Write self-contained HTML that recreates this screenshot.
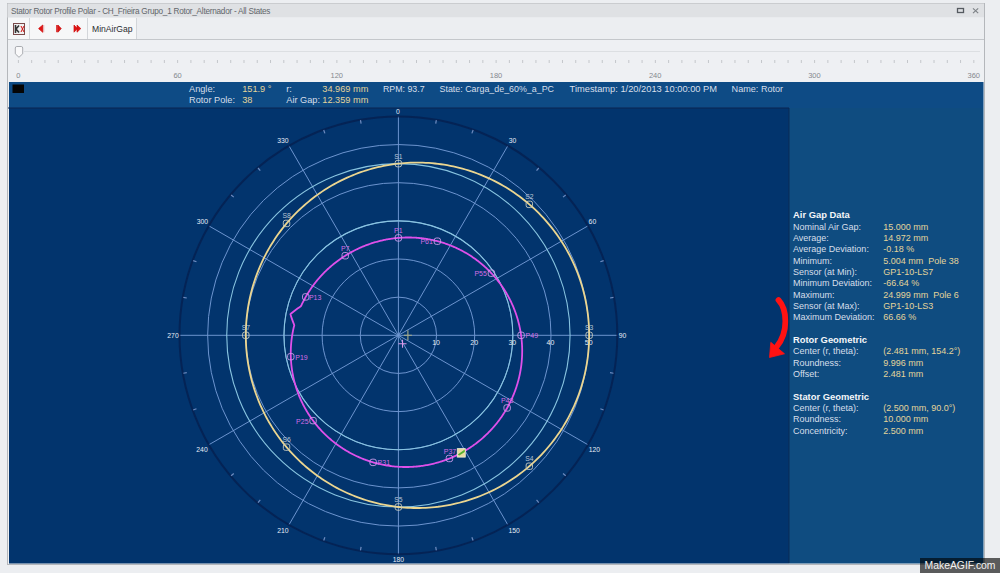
<!DOCTYPE html>
<html><head><meta charset="utf-8">
<style>
*{margin:0;padding:0;box-sizing:border-box}
html,body{width:1000px;height:573px;overflow:hidden;background:#eceef1;font-family:"Liberation Sans",sans-serif}
svg{position:absolute;left:0;top:0}
.al{font-size:6.8px;fill:#e6ecf5;text-anchor:middle}
.gl{font-size:7px;fill:#e6ecf5;text-anchor:middle}
.sl{font-size:6.8px;fill:#b9c4d4;text-anchor:middle}
.pl{font-size:7px;fill:#d46ee6}
.sll{font-size:7.5px;fill:#85898f}
.t{position:absolute;white-space:nowrap;line-height:1}
.lb{color:#d7dfea}
.vl{color:#e3d49a}
</style></head><body>
<svg width="1000" height="573" viewBox="0 0 1000 573">
<!-- window -->
<rect x="7.5" y="3.5" width="977" height="561" fill="#eef0f3" stroke="#b4b7bb" stroke-width="1"/>
<rect x="7.5" y="3.5" width="976.5" height="14" fill="#dfe1e4"/>
<rect x="8" y="17.5" width="976" height="22" fill="#eceef1"/>
<line x1="8" y1="39.5" x2="984" y2="39.5" stroke="#c4c7cb"/>
<rect x="8" y="18" width="21" height="21" fill="#f6f7f8"/>
<rect x="30" y="18" width="57" height="21" fill="#f6f7f8"/>
<rect x="88" y="18" width="48" height="21" fill="#f6f7f8"/>
<line x1="29.5" y1="18" x2="29.5" y2="39" stroke="#d3d6da"/>
<line x1="87.5" y1="18" x2="87.5" y2="39" stroke="#d3d6da"/>
<line x1="136.5" y1="18" x2="136.5" y2="39" stroke="#d3d6da"/>
<!-- slider track -->
<line x1="24" y1="51.5" x2="980" y2="51.5" stroke="#dcdfe2"/>
<line x1="18.40" y1="60" x2="18.40" y2="63" stroke="#c4c7cb" stroke-width="1"/><line x1="31.67" y1="60" x2="31.67" y2="63" stroke="#c4c7cb" stroke-width="1"/><line x1="44.94" y1="60" x2="44.94" y2="63" stroke="#c4c7cb" stroke-width="1"/><line x1="58.21" y1="60" x2="58.21" y2="63" stroke="#c4c7cb" stroke-width="1"/><line x1="71.48" y1="60" x2="71.48" y2="63" stroke="#c4c7cb" stroke-width="1"/><line x1="84.75" y1="60" x2="84.75" y2="63" stroke="#c4c7cb" stroke-width="1"/><line x1="98.02" y1="60" x2="98.02" y2="63" stroke="#c4c7cb" stroke-width="1"/><line x1="111.29" y1="60" x2="111.29" y2="63" stroke="#c4c7cb" stroke-width="1"/><line x1="124.56" y1="60" x2="124.56" y2="63" stroke="#c4c7cb" stroke-width="1"/><line x1="137.83" y1="60" x2="137.83" y2="63" stroke="#c4c7cb" stroke-width="1"/><line x1="151.10" y1="60" x2="151.10" y2="63" stroke="#c4c7cb" stroke-width="1"/><line x1="164.37" y1="60" x2="164.37" y2="63" stroke="#c4c7cb" stroke-width="1"/><line x1="177.64" y1="60" x2="177.64" y2="63" stroke="#c4c7cb" stroke-width="1"/><line x1="190.91" y1="60" x2="190.91" y2="63" stroke="#c4c7cb" stroke-width="1"/><line x1="204.18" y1="60" x2="204.18" y2="63" stroke="#c4c7cb" stroke-width="1"/><line x1="217.45" y1="60" x2="217.45" y2="63" stroke="#c4c7cb" stroke-width="1"/><line x1="230.72" y1="60" x2="230.72" y2="63" stroke="#c4c7cb" stroke-width="1"/><line x1="243.99" y1="60" x2="243.99" y2="63" stroke="#c4c7cb" stroke-width="1"/><line x1="257.26" y1="60" x2="257.26" y2="63" stroke="#c4c7cb" stroke-width="1"/><line x1="270.53" y1="60" x2="270.53" y2="63" stroke="#c4c7cb" stroke-width="1"/><line x1="283.80" y1="60" x2="283.80" y2="63" stroke="#c4c7cb" stroke-width="1"/><line x1="297.07" y1="60" x2="297.07" y2="63" stroke="#c4c7cb" stroke-width="1"/><line x1="310.34" y1="60" x2="310.34" y2="63" stroke="#c4c7cb" stroke-width="1"/><line x1="323.61" y1="60" x2="323.61" y2="63" stroke="#c4c7cb" stroke-width="1"/><line x1="336.88" y1="60" x2="336.88" y2="63" stroke="#c4c7cb" stroke-width="1"/><line x1="350.15" y1="60" x2="350.15" y2="63" stroke="#c4c7cb" stroke-width="1"/><line x1="363.42" y1="60" x2="363.42" y2="63" stroke="#c4c7cb" stroke-width="1"/><line x1="376.69" y1="60" x2="376.69" y2="63" stroke="#c4c7cb" stroke-width="1"/><line x1="389.96" y1="60" x2="389.96" y2="63" stroke="#c4c7cb" stroke-width="1"/><line x1="403.23" y1="60" x2="403.23" y2="63" stroke="#c4c7cb" stroke-width="1"/><line x1="416.50" y1="60" x2="416.50" y2="63" stroke="#c4c7cb" stroke-width="1"/><line x1="429.77" y1="60" x2="429.77" y2="63" stroke="#c4c7cb" stroke-width="1"/><line x1="443.04" y1="60" x2="443.04" y2="63" stroke="#c4c7cb" stroke-width="1"/><line x1="456.31" y1="60" x2="456.31" y2="63" stroke="#c4c7cb" stroke-width="1"/><line x1="469.58" y1="60" x2="469.58" y2="63" stroke="#c4c7cb" stroke-width="1"/><line x1="482.85" y1="60" x2="482.85" y2="63" stroke="#c4c7cb" stroke-width="1"/><line x1="496.12" y1="60" x2="496.12" y2="63" stroke="#c4c7cb" stroke-width="1"/><line x1="509.39" y1="60" x2="509.39" y2="63" stroke="#c4c7cb" stroke-width="1"/><line x1="522.66" y1="60" x2="522.66" y2="63" stroke="#c4c7cb" stroke-width="1"/><line x1="535.93" y1="60" x2="535.93" y2="63" stroke="#c4c7cb" stroke-width="1"/><line x1="549.20" y1="60" x2="549.20" y2="63" stroke="#c4c7cb" stroke-width="1"/><line x1="562.47" y1="60" x2="562.47" y2="63" stroke="#c4c7cb" stroke-width="1"/><line x1="575.74" y1="60" x2="575.74" y2="63" stroke="#c4c7cb" stroke-width="1"/><line x1="589.01" y1="60" x2="589.01" y2="63" stroke="#c4c7cb" stroke-width="1"/><line x1="602.28" y1="60" x2="602.28" y2="63" stroke="#c4c7cb" stroke-width="1"/><line x1="615.55" y1="60" x2="615.55" y2="63" stroke="#c4c7cb" stroke-width="1"/><line x1="628.82" y1="60" x2="628.82" y2="63" stroke="#c4c7cb" stroke-width="1"/><line x1="642.09" y1="60" x2="642.09" y2="63" stroke="#c4c7cb" stroke-width="1"/><line x1="655.36" y1="60" x2="655.36" y2="63" stroke="#c4c7cb" stroke-width="1"/><line x1="668.63" y1="60" x2="668.63" y2="63" stroke="#c4c7cb" stroke-width="1"/><line x1="681.90" y1="60" x2="681.90" y2="63" stroke="#c4c7cb" stroke-width="1"/><line x1="695.17" y1="60" x2="695.17" y2="63" stroke="#c4c7cb" stroke-width="1"/><line x1="708.44" y1="60" x2="708.44" y2="63" stroke="#c4c7cb" stroke-width="1"/><line x1="721.71" y1="60" x2="721.71" y2="63" stroke="#c4c7cb" stroke-width="1"/><line x1="734.98" y1="60" x2="734.98" y2="63" stroke="#c4c7cb" stroke-width="1"/><line x1="748.25" y1="60" x2="748.25" y2="63" stroke="#c4c7cb" stroke-width="1"/><line x1="761.52" y1="60" x2="761.52" y2="63" stroke="#c4c7cb" stroke-width="1"/><line x1="774.79" y1="60" x2="774.79" y2="63" stroke="#c4c7cb" stroke-width="1"/><line x1="788.06" y1="60" x2="788.06" y2="63" stroke="#c4c7cb" stroke-width="1"/><line x1="801.33" y1="60" x2="801.33" y2="63" stroke="#c4c7cb" stroke-width="1"/><line x1="814.60" y1="60" x2="814.60" y2="63" stroke="#c4c7cb" stroke-width="1"/><line x1="827.87" y1="60" x2="827.87" y2="63" stroke="#c4c7cb" stroke-width="1"/><line x1="841.14" y1="60" x2="841.14" y2="63" stroke="#c4c7cb" stroke-width="1"/><line x1="854.41" y1="60" x2="854.41" y2="63" stroke="#c4c7cb" stroke-width="1"/><line x1="867.68" y1="60" x2="867.68" y2="63" stroke="#c4c7cb" stroke-width="1"/><line x1="880.95" y1="60" x2="880.95" y2="63" stroke="#c4c7cb" stroke-width="1"/><line x1="894.22" y1="60" x2="894.22" y2="63" stroke="#c4c7cb" stroke-width="1"/><line x1="907.49" y1="60" x2="907.49" y2="63" stroke="#c4c7cb" stroke-width="1"/><line x1="920.76" y1="60" x2="920.76" y2="63" stroke="#c4c7cb" stroke-width="1"/><line x1="934.03" y1="60" x2="934.03" y2="63" stroke="#c4c7cb" stroke-width="1"/><line x1="947.30" y1="60" x2="947.30" y2="63" stroke="#c4c7cb" stroke-width="1"/><line x1="960.57" y1="60" x2="960.57" y2="63" stroke="#c4c7cb" stroke-width="1"/><line x1="973.84" y1="60" x2="973.84" y2="63" stroke="#c4c7cb" stroke-width="1"/>
<text x="18.40" y="77.6" text-anchor="middle" class="sll">0</text><text x="177.60" y="77.6" text-anchor="middle" class="sll">60</text><text x="336.80" y="77.6" text-anchor="middle" class="sll">120</text><text x="495.99" y="77.6" text-anchor="middle" class="sll">180</text><text x="655.19" y="77.6" text-anchor="middle" class="sll">240</text><text x="814.39" y="77.6" text-anchor="middle" class="sll">300</text><text x="980" y="77.6" text-anchor="end" class="sll">360</text>
<path d="M15.3,48 q0,-1.5 1.5,-1.5 h4.4 q1.5,0 1.5,1.5 v5.8 l-3.7,3.5 l-3.7,-3.5 Z" fill="#f9f9fa" stroke="#a0a4a9" stroke-width="0.9"/>
<!-- icons -->
<rect x="13.5" y="23.5" width="11" height="11" fill="#f0f0f0" stroke="#7a4a4a" stroke-width="1"/>
<path d="M15.5,25 v8 M16,29 l3,-3.5 M16,29 l3,3.5" stroke="#333" stroke-width="1.6"/>
<path d="M21,26 l3,6 M24,26 l-3,6" stroke="#d01010" stroke-width="1"/>
<path d="M38.6,28.6 L42.8,25 V32.3 Z" fill="#e01515" stroke="#d01010" stroke-width="0.8" stroke-linejoin="round"/>
<line x1="43.8" y1="25" x2="43.8" y2="32.2" stroke="#e8b0b0" stroke-width="0.9"/>
<rect x="56.2" y="25" width="1.6" height="7.2" fill="#d81515"/>
<path d="M58,25 L61.3,28.6 L58,32.2 Z" fill="#e01515" stroke="#c01010" stroke-width="0.6" stroke-linejoin="round"/>
<path d="M74,25 L77.5,28.6 L74,32.2 Z M77,25 L80.8,28.6 L77,32.2 Z" fill="#e01515" stroke="#d01010" stroke-width="0.7" stroke-linejoin="round"/>
<!-- title buttons -->
<rect x="957.5" y="8.5" width="6" height="4" fill="none" stroke="#555a60" stroke-width="1.3"/>
<path d="M973,8.3 l5.2,4.8 M978.2,8.3 l-5.2,4.8" stroke="#7c8085" stroke-width="1.1"/>
<!-- info bar + right panel -->
<rect x="9" y="82" width="974.5" height="26" fill="#0e4b85"/>
<rect x="789" y="108" width="194.5" height="455.5" fill="#0f4c80"/>
<rect x="12.5" y="84.5" width="11.5" height="8.5" fill="#050505"/>
<rect x="9" y="108" width="780" height="455.5" fill="#02346d"/>
<circle cx="398.4" cy="335.3" r="38.15" fill="none" stroke="#7299d4" stroke-width="0.95"/>
<circle cx="398.4" cy="335.3" r="76.30" fill="none" stroke="#7299d4" stroke-width="0.95"/>
<circle cx="398.4" cy="335.3" r="114.45" fill="none" stroke="#7299d4" stroke-width="0.95"/>
<circle cx="398.4" cy="335.3" r="152.60" fill="none" stroke="#7299d4" stroke-width="0.95"/>
<circle cx="398.4" cy="335.3" r="190.75" fill="none" stroke="#7299d4" stroke-width="0.95"/>
<line x1="398.4" y1="335.3" x2="398.40" y2="116.40" stroke="#7299d4" stroke-width="0.95"/>
<line x1="398.4" y1="335.3" x2="507.85" y2="145.73" stroke="#7299d4" stroke-width="0.95"/>
<line x1="398.4" y1="335.3" x2="587.97" y2="225.85" stroke="#7299d4" stroke-width="0.95"/>
<line x1="398.4" y1="335.3" x2="617.30" y2="335.30" stroke="#7299d4" stroke-width="0.95"/>
<line x1="398.4" y1="335.3" x2="587.97" y2="444.75" stroke="#7299d4" stroke-width="0.95"/>
<line x1="398.4" y1="335.3" x2="507.85" y2="524.87" stroke="#7299d4" stroke-width="0.95"/>
<line x1="398.4" y1="335.3" x2="398.40" y2="554.20" stroke="#7299d4" stroke-width="0.95"/>
<line x1="398.4" y1="335.3" x2="288.95" y2="524.87" stroke="#7299d4" stroke-width="0.95"/>
<line x1="398.4" y1="335.3" x2="208.83" y2="444.75" stroke="#7299d4" stroke-width="0.95"/>
<line x1="398.4" y1="335.3" x2="179.50" y2="335.30" stroke="#7299d4" stroke-width="0.95"/>
<line x1="398.4" y1="335.3" x2="208.83" y2="225.85" stroke="#7299d4" stroke-width="0.95"/>
<line x1="398.4" y1="335.3" x2="288.95" y2="145.73" stroke="#7299d4" stroke-width="0.95"/>
<circle cx="398.4" cy="335.3" r="218.9" fill="none" stroke="#061a48" stroke-width="2" opacity="0.65"/>
<line x1="436.32" y1="120.22" x2="435.72" y2="123.66" stroke="#6f8cc0" stroke-width="1.2"/>
<line x1="473.10" y1="130.07" x2="471.90" y2="133.36" stroke="#6f8cc0" stroke-width="1.2"/>
<line x1="538.78" y1="168.00" x2="536.54" y2="170.68" stroke="#6f8cc0" stroke-width="1.2"/>
<line x1="565.70" y1="194.92" x2="563.02" y2="197.16" stroke="#6f8cc0" stroke-width="1.2"/>
<line x1="603.63" y1="260.60" x2="600.34" y2="261.80" stroke="#6f8cc0" stroke-width="1.2"/>
<line x1="613.48" y1="297.38" x2="610.04" y2="297.98" stroke="#6f8cc0" stroke-width="1.2"/>
<line x1="613.48" y1="373.22" x2="610.04" y2="372.62" stroke="#6f8cc0" stroke-width="1.2"/>
<line x1="603.63" y1="410.00" x2="600.34" y2="408.80" stroke="#6f8cc0" stroke-width="1.2"/>
<line x1="565.70" y1="475.68" x2="563.02" y2="473.44" stroke="#6f8cc0" stroke-width="1.2"/>
<line x1="538.78" y1="502.60" x2="536.54" y2="499.92" stroke="#6f8cc0" stroke-width="1.2"/>
<line x1="473.10" y1="540.53" x2="471.90" y2="537.24" stroke="#6f8cc0" stroke-width="1.2"/>
<line x1="436.32" y1="550.38" x2="435.72" y2="546.94" stroke="#6f8cc0" stroke-width="1.2"/>
<line x1="360.48" y1="550.38" x2="361.08" y2="546.94" stroke="#6f8cc0" stroke-width="1.2"/>
<line x1="323.70" y1="540.53" x2="324.90" y2="537.24" stroke="#6f8cc0" stroke-width="1.2"/>
<line x1="258.02" y1="502.60" x2="260.26" y2="499.92" stroke="#6f8cc0" stroke-width="1.2"/>
<line x1="231.10" y1="475.68" x2="233.78" y2="473.44" stroke="#6f8cc0" stroke-width="1.2"/>
<line x1="193.17" y1="410.00" x2="196.46" y2="408.80" stroke="#6f8cc0" stroke-width="1.2"/>
<line x1="183.32" y1="373.22" x2="186.76" y2="372.62" stroke="#6f8cc0" stroke-width="1.2"/>
<line x1="183.32" y1="297.38" x2="186.76" y2="297.98" stroke="#6f8cc0" stroke-width="1.2"/>
<line x1="193.17" y1="260.60" x2="196.46" y2="261.80" stroke="#6f8cc0" stroke-width="1.2"/>
<line x1="231.10" y1="194.92" x2="233.78" y2="197.16" stroke="#6f8cc0" stroke-width="1.2"/>
<line x1="258.02" y1="168.00" x2="260.26" y2="170.68" stroke="#6f8cc0" stroke-width="1.2"/>
<line x1="323.70" y1="130.07" x2="324.90" y2="133.36" stroke="#6f8cc0" stroke-width="1.2"/>
<line x1="360.48" y1="120.22" x2="361.08" y2="123.66" stroke="#6f8cc0" stroke-width="1.2"/>
<text x="397.90" y="114.30" class="al">0</text>
<text x="512.50" y="143.20" class="al">30</text>
<text x="592.40" y="224.10" class="al">60</text>
<text x="622.50" y="338.20" class="al">90</text>
<text x="594.30" y="451.60" class="al">120</text>
<text x="514.10" y="532.70" class="al">150</text>
<text x="398.30" y="561.50" class="al">180</text>
<text x="282.80" y="532.70" class="al">210</text>
<text x="202.00" y="451.90" class="al">240</text>
<text x="173.00" y="338.20" class="al">270</text>
<text x="202.30" y="224.00" class="al">300</text>
<text x="282.80" y="142.90" class="al">330</text>
<circle cx="398.4" cy="335.3" r="114.45" fill="none" stroke="#88c4e0" stroke-width="1.1"/>
<circle cx="398.4" cy="335.3" r="171.68" fill="none" stroke="#88c4e0" stroke-width="1.1"/>
<text x="436.05" y="344.50" class="gl">10</text>
<text x="474.20" y="344.50" class="gl">20</text>
<text x="512.35" y="344.50" class="gl">30</text>
<text x="550.50" y="344.50" class="gl">40</text>
<text x="588.65" y="344.50" class="gl">50</text>
<path d="M398.40,163.62 L401.40,163.32 L404.41,163.06 L407.44,162.86 L410.47,162.72 L413.51,162.62 L416.55,162.58 L419.61,162.60 L422.66,162.67 L425.72,162.79 L428.79,162.97 L431.85,163.21 L434.92,163.50 L437.98,163.84 L441.05,164.25 L444.11,164.71 L447.17,165.22 L450.22,165.79 L453.27,166.42 L456.31,167.11 L459.35,167.85 L462.37,168.65 L465.39,169.50 L468.39,170.41 L471.38,171.38 L474.36,172.40 L477.32,173.48 L480.27,174.62 L483.20,175.81 L486.11,177.06 L489.01,178.37 L491.88,179.72 L494.73,181.14 L497.56,182.61 L500.36,184.13 L503.14,185.71 L505.90,187.34 L508.63,189.03 L511.32,190.76 L513.99,192.55 L516.63,194.40 L519.24,196.29 L521.81,198.24 L524.35,200.23 L526.86,202.28 L529.33,204.37 L531.76,206.51 L534.16,208.70 L536.51,210.94 L538.83,213.23 L541.10,215.56 L543.34,217.93 L545.53,220.35 L547.67,222.82 L549.77,225.32 L551.83,227.87 L553.84,230.46 L555.80,233.09 L557.71,235.75 L559.57,238.46 L561.38,241.20 L563.14,243.98 L564.85,246.80 L566.51,249.65 L568.11,252.53 L569.66,255.44 L571.15,258.39 L572.59,261.36 L573.97,264.36 L575.30,267.40 L576.57,270.45 L577.78,273.54 L578.93,276.64 L580.02,279.77 L581.05,282.93 L582.02,286.10 L582.93,289.29 L583.78,292.50 L584.57,295.73 L585.30,298.97 L585.97,302.23 L586.57,305.50 L587.11,308.78 L587.59,312.07 L588.00,315.37 L588.35,318.68 L588.64,322.00 L588.86,325.32 L589.02,328.64 L589.12,331.97 L589.15,335.30 L589.12,338.63 L589.02,341.96 L588.86,345.28 L588.64,348.60 L588.35,351.92 L588.00,355.23 L587.59,358.53 L587.11,361.82 L586.57,365.10 L585.97,368.37 L585.30,371.63 L584.57,374.87 L583.78,378.10 L582.93,381.31 L582.02,384.50 L581.05,387.67 L580.02,390.83 L578.93,393.96 L577.78,397.06 L576.57,400.15 L575.30,403.20 L573.97,406.24 L572.59,409.24 L571.15,412.21 L569.66,415.16 L568.11,418.07 L566.51,420.95 L564.85,423.80 L563.14,426.62 L561.38,429.40 L559.57,432.14 L557.71,434.85 L555.80,437.51 L553.84,440.14 L551.83,442.73 L549.77,445.28 L547.67,447.78 L545.53,450.25 L543.34,452.67 L541.10,455.04 L538.83,457.37 L536.51,459.66 L534.16,461.90 L531.76,464.09 L529.33,466.23 L526.86,468.32 L524.35,470.37 L521.81,472.36 L519.24,474.31 L516.63,476.20 L513.99,478.05 L511.32,479.84 L508.63,481.57 L505.90,483.26 L503.14,484.89 L500.36,486.47 L497.56,487.99 L494.73,489.46 L491.88,490.88 L489.01,492.23 L486.11,493.54 L483.20,494.79 L480.27,495.98 L477.32,497.12 L474.36,498.20 L471.38,499.22 L468.39,500.19 L465.39,501.10 L462.37,501.95 L459.35,502.75 L456.31,503.49 L453.27,504.18 L450.22,504.81 L447.17,505.38 L444.11,505.89 L441.05,506.35 L437.98,506.76 L434.92,507.10 L431.85,507.39 L428.79,507.63 L425.72,507.81 L422.66,507.93 L419.61,508.00 L416.55,508.02 L413.51,507.98 L410.47,507.88 L407.44,507.74 L404.41,507.54 L401.40,507.28 L398.40,506.98 L395.41,506.62 L392.43,506.21 L389.47,505.74 L386.52,505.23 L383.58,504.67 L380.66,504.05 L377.76,503.39 L374.88,502.68 L372.01,501.91 L369.16,501.10 L366.34,500.25 L363.53,499.34 L360.75,498.39 L357.98,497.40 L355.25,496.36 L352.53,495.27 L349.84,494.14 L347.17,492.97 L344.53,491.75 L341.92,490.49 L339.33,489.19 L336.77,487.85 L334.23,486.47 L331.73,485.05 L329.25,483.58 L326.81,482.08 L324.39,480.55 L322.01,478.97 L319.65,477.36 L317.33,475.72 L315.04,474.03 L312.78,472.32 L310.56,470.57 L308.37,468.78 L306.21,466.97 L304.08,465.12 L301.99,463.24 L299.94,461.33 L297.92,459.39 L295.93,457.42 L293.98,455.42 L292.07,453.39 L290.19,451.34 L288.35,449.26 L286.54,447.16 L284.78,445.02 L283.05,442.87 L281.36,440.69 L279.70,438.48 L278.08,436.26 L276.50,434.01 L274.96,431.74 L273.46,429.45 L272.00,427.14 L270.57,424.81 L269.19,422.46 L267.84,420.09 L266.53,417.70 L265.26,415.30 L264.03,412.88 L262.84,410.44 L261.69,407.99 L260.58,405.52 L259.51,403.04 L258.48,400.55 L257.49,398.04 L256.54,395.52 L255.62,392.99 L254.75,390.44 L253.92,387.89 L253.13,385.32 L252.38,382.74 L251.67,380.16 L251.00,377.57 L250.37,374.96 L249.78,372.35 L249.23,369.74 L248.73,367.11 L248.26,364.48 L247.83,361.85 L247.45,359.21 L247.10,356.56 L246.80,353.91 L246.53,351.26 L246.31,348.61 L246.13,345.95 L245.98,343.29 L245.88,340.63 L245.82,337.96 L245.80,335.30 L245.82,332.64 L245.88,329.97 L245.98,327.31 L246.13,324.65 L246.31,321.99 L246.53,319.34 L246.80,316.69 L247.10,314.04 L247.45,311.39 L247.83,308.75 L248.26,306.12 L248.73,303.49 L249.23,300.86 L249.78,298.25 L250.37,295.64 L251.00,293.03 L251.67,290.44 L252.38,287.86 L253.13,285.28 L253.92,282.71 L254.75,280.16 L255.62,277.61 L256.54,275.08 L257.49,272.56 L258.48,270.05 L259.51,267.56 L260.58,265.08 L261.69,262.61 L262.84,260.16 L264.03,257.72 L265.26,255.30 L266.53,252.90 L267.84,250.51 L269.19,248.14 L270.57,245.79 L272.00,243.46 L273.46,241.15 L274.96,238.86 L276.50,236.59 L278.08,234.34 L279.70,232.12 L281.36,229.91 L283.05,227.73 L284.78,225.58 L286.54,223.44 L288.35,221.34 L290.19,219.26 L292.07,217.21 L293.98,215.18 L295.93,213.18 L297.92,211.21 L299.94,209.27 L301.99,207.36 L304.08,205.48 L306.21,203.63 L308.37,201.82 L310.56,200.03 L312.78,198.28 L315.04,196.57 L317.33,194.88 L319.65,193.24 L322.01,191.63 L324.39,190.05 L326.81,188.52 L329.25,187.02 L331.73,185.55 L334.23,184.13 L336.77,182.75 L339.33,181.41 L341.92,180.11 L344.53,178.85 L347.17,177.63 L349.84,176.46 L352.53,175.33 L355.25,174.24 L357.98,173.20 L360.75,172.21 L363.53,171.26 L366.34,170.35 L369.16,169.50 L372.01,168.69 L374.88,167.92 L377.76,167.21 L380.66,166.55 L383.58,165.93 L386.52,165.37 L389.47,164.86 L392.43,164.39 L395.41,163.98 Z" fill="none" stroke="#ecd690" stroke-width="1.8"/>
<path d="M398.40,237.89 L399.25,237.82 L400.10,237.76 L400.96,237.71 L401.81,237.65 L402.67,237.61 L403.52,237.57 L404.38,237.54 L405.24,237.52 L406.10,237.50 L406.96,237.48 L407.82,237.48 L408.68,237.48 L409.54,237.48 L410.41,237.50 L411.27,237.52 L412.14,237.54 L413.01,237.57 L413.87,237.61 L414.74,237.66 L415.61,237.71 L416.48,237.77 L417.35,237.83 L418.22,237.90 L419.09,237.98 L419.96,238.07 L420.83,238.16 L421.70,238.26 L422.57,238.36 L423.44,238.47 L424.31,238.59 L425.18,238.72 L426.06,238.85 L426.93,238.99 L427.80,239.13 L428.67,239.29 L429.54,239.45 L430.42,239.61 L431.29,239.79 L432.16,239.97 L433.03,240.15 L433.90,240.35 L434.77,240.55 L435.64,240.76 L436.51,240.97 L437.38,241.20 L438.25,241.43 L439.11,241.66 L439.98,241.91 L440.85,242.16 L441.71,242.42 L442.58,242.68 L443.44,242.95 L444.30,243.23 L445.16,243.52 L446.02,243.82 L446.88,244.12 L447.74,244.43 L448.60,244.74 L449.45,245.07 L450.30,245.40 L451.16,245.74 L452.01,246.08 L452.86,246.44 L453.70,246.80 L454.55,247.16 L455.39,247.54 L456.23,247.92 L457.07,248.31 L457.91,248.71 L458.75,249.11 L459.58,249.53 L460.41,249.94 L461.24,250.37 L462.07,250.81 L462.89,251.25 L463.72,251.70 L464.54,252.16 L465.35,252.62 L466.17,253.09 L466.98,253.57 L467.79,254.06 L468.59,254.55 L469.40,255.05 L470.20,255.56 L470.99,256.08 L471.79,256.60 L472.58,257.13 L473.36,257.67 L474.15,258.22 L474.93,258.77 L475.70,259.33 L476.48,259.90 L477.24,260.48 L478.01,261.06 L478.77,261.65 L479.53,262.25 L480.28,262.86 L481.03,263.47 L481.78,264.09 L482.52,264.72 L483.25,265.35 L483.98,265.99 L484.71,266.64 L485.44,267.30 L486.15,267.96 L486.87,268.64 L487.58,269.31 L488.28,270.00 L488.98,270.69 L489.67,271.39 L490.36,272.10 L491.04,272.81 L491.72,273.53 L492.40,274.26 L493.06,274.99 L493.73,275.73 L494.38,276.48 L495.03,277.24 L495.68,278.00 L496.32,278.77 L496.95,279.54 L497.58,280.33 L498.20,281.11 L498.81,281.91 L499.42,282.71 L500.02,283.52 L500.62,284.34 L501.21,285.16 L501.79,285.99 L502.37,286.82 L502.94,287.66 L503.50,288.51 L504.05,289.36 L504.60,290.22 L505.14,291.08 L505.68,291.96 L506.21,292.83 L506.73,293.72 L507.24,294.61 L507.75,295.50 L508.24,296.40 L508.73,297.31 L509.22,298.22 L509.69,299.14 L510.16,300.06 L510.62,300.99 L511.07,301.93 L511.51,302.87 L511.95,303.81 L512.38,304.76 L512.80,305.72 L513.21,306.68 L513.61,307.64 L514.00,308.61 L514.39,309.59 L514.77,310.57 L515.13,311.55 L515.49,312.54 L515.85,313.53 L516.19,314.53 L516.52,315.53 L516.84,316.54 L517.16,317.55 L517.47,318.57 L517.76,319.59 L518.05,320.61 L518.33,321.64 L518.60,322.67 L518.86,323.70 L519.11,324.74 L519.35,325.78 L519.58,326.83 L519.81,327.87 L520.02,328.93 L520.22,329.98 L520.41,331.04 L520.60,332.10 L520.77,333.16 L520.94,334.23 L521.09,335.30 L521.23,336.37 L521.37,337.45 L521.49,338.52 L521.60,339.60 L521.71,340.68 L521.80,341.77 L521.88,342.85 L521.96,343.94 L522.02,345.03 L522.07,346.12 L522.11,347.21 L522.14,348.31 L522.16,349.40 L522.18,350.50 L522.17,351.60 L522.16,352.69 L522.14,353.79 L522.11,354.89 L522.07,356.00 L522.02,357.10 L521.95,358.20 L521.88,359.30 L521.79,360.40 L521.70,361.51 L521.59,362.61 L521.47,363.71 L521.35,364.82 L521.21,365.92 L521.06,367.02 L520.90,368.12 L520.73,369.22 L520.55,370.32 L520.35,371.42 L520.15,372.52 L519.93,373.62 L519.71,374.72 L519.47,375.81 L519.23,376.90 L518.97,378.00 L518.70,379.09 L518.42,380.17 L518.13,381.26 L517.83,382.34 L517.52,383.43 L517.20,384.51 L516.86,385.58 L516.52,386.66 L516.16,387.73 L515.80,388.80 L515.42,389.87 L515.04,390.93 L514.64,391.99 L514.23,393.05 L513.81,394.10 L513.38,395.16 L512.94,396.20 L512.49,397.25 L512.03,398.29 L511.56,399.32 L511.08,400.35 L510.58,401.38 L510.08,402.40 L509.57,403.42 L509.04,404.44 L508.51,405.45 L507.97,406.45 L507.41,407.45 L506.85,408.45 L506.27,409.44 L505.69,410.42 L505.09,411.40 L504.49,412.38 L503.87,413.35 L503.25,414.31 L502.62,415.27 L501.97,416.22 L501.32,417.17 L500.66,418.10 L499.98,419.04 L499.30,419.97 L498.61,420.89 L497.91,421.80 L497.20,422.71 L496.48,423.61 L495.75,424.50 L495.01,425.39 L494.26,426.27 L493.51,427.14 L492.74,428.01 L491.97,428.87 L491.19,429.72 L490.40,430.56 L489.60,431.40 L488.79,432.23 L487.97,433.05 L487.15,433.86 L486.31,434.67 L485.47,435.46 L484.62,436.25 L483.76,437.03 L482.90,437.80 L482.02,438.57 L481.14,439.32 L480.25,440.07 L479.36,440.81 L478.45,441.53 L477.54,442.25 L476.62,442.96 L475.70,443.67 L474.76,444.36 L473.82,445.04 L472.88,445.72 L471.92,446.38 L470.96,447.04 L470.00,447.68 L469.02,448.32 L468.04,448.95 L467.06,449.56 L466.06,450.17 L465.06,450.77 L464.06,451.35 L463.05,451.93 L462.03,452.50 L461.01,453.06 L459.98,453.60 L458.95,454.14 L457.91,454.67 L456.87,455.18 L455.82,455.69 L454.77,456.18 L453.71,456.67 L452.65,457.14 L451.58,457.60 L450.51,458.06 L449.43,458.50 L448.35,458.93 L447.26,459.35 L446.18,459.76 L445.08,460.16 L443.99,460.55 L442.89,460.92 L441.78,461.29 L440.67,461.64 L439.56,461.99 L438.45,462.32 L437.33,462.64 L436.21,462.95 L435.09,463.25 L433.96,463.54 L432.83,463.81 L431.70,464.08 L430.57,464.33 L429.44,464.57 L428.30,464.80 L427.16,465.02 L426.02,465.23 L424.87,465.43 L423.73,465.61 L422.58,465.79 L421.44,465.95 L420.29,466.10 L419.14,466.24 L417.99,466.37 L416.84,466.48 L415.68,466.59 L414.53,466.68 L413.38,466.77 L412.23,466.84 L411.07,466.90 L409.92,466.94 L408.76,466.98 L407.61,467.00 L406.46,467.02 L405.30,467.02 L404.15,467.01 L403.00,466.99 L401.85,466.96 L400.70,466.91 L399.55,466.86 L398.40,466.79 L397.25,466.72 L396.11,466.63 L394.96,466.53 L393.82,466.42 L392.68,466.29 L391.54,466.16 L390.41,466.01 L389.27,465.86 L388.14,465.69 L387.01,465.51 L385.88,465.32 L384.76,465.12 L383.63,464.91 L382.51,464.69 L381.40,464.46 L380.28,464.21 L379.17,463.96 L378.06,463.69 L376.96,463.42 L375.86,463.13 L374.76,462.83 L373.67,462.53 L372.58,462.21 L371.49,461.88 L370.41,461.54 L369.34,461.19 L368.26,460.83 L367.19,460.46 L366.13,460.08 L365.07,459.69 L364.01,459.29 L362.96,458.88 L361.92,458.46 L360.88,458.03 L359.84,457.59 L358.81,457.14 L357.79,456.68 L356.77,456.21 L355.75,455.74 L354.74,455.25 L353.74,454.75 L352.74,454.25 L351.75,453.73 L350.76,453.21 L349.78,452.67 L348.81,452.13 L347.84,451.58 L346.88,451.02 L345.92,450.45 L344.97,449.87 L344.03,449.28 L343.10,448.69 L342.17,448.09 L341.24,447.47 L340.33,446.85 L339.42,446.22 L338.52,445.59 L337.62,444.94 L336.74,444.29 L335.85,443.63 L334.98,442.96 L334.12,442.29 L333.26,441.60 L332.41,440.91 L331.56,440.22 L330.73,439.51 L329.90,438.80 L329.08,438.08 L328.26,437.35 L327.46,436.62 L326.66,435.88 L325.87,435.13 L325.09,434.37 L324.31,433.61 L323.55,432.85 L322.79,432.07 L322.04,431.29 L321.30,430.51 L320.57,429.72 L319.85,428.92 L319.13,428.11 L318.42,427.30 L317.72,426.49 L317.03,425.67 L316.35,424.84 L315.68,424.01 L315.01,423.17 L314.36,422.33 L313.71,421.48 L313.07,420.63 L312.44,419.77 L311.82,418.91 L311.21,418.04 L310.60,417.17 L310.01,416.30 L309.42,415.42 L308.85,414.53 L308.28,413.64 L307.72,412.75 L307.17,411.85 L306.63,410.95 L306.10,410.05 L305.57,409.14 L305.06,408.23 L304.56,407.31 L304.06,406.39 L303.57,405.47 L303.10,404.54 L302.63,403.61 L302.17,402.68 L301.72,401.75 L301.28,400.81 L300.85,399.87 L300.42,398.93 L300.01,397.98 L299.61,397.03 L299.21,396.08 L298.83,395.13 L298.45,394.18 L298.08,393.22 L297.72,392.26 L297.38,391.30 L297.04,390.34 L296.71,389.37 L296.38,388.41 L296.07,387.44 L295.77,386.47 L295.47,385.50 L295.19,384.53 L294.91,383.56 L294.65,382.58 L294.39,381.61 L294.14,380.63 L293.90,379.66 L293.67,378.68 L293.45,377.70 L293.23,376.73 L293.03,375.75 L292.84,374.77 L292.65,373.79 L292.47,372.81 L292.30,371.83 L292.15,370.85 L291.99,369.87 L291.85,368.89 L291.72,367.92 L291.60,366.94 L291.48,365.96 L291.37,364.98 L291.28,364.00 L291.19,363.03 L291.11,362.05 L291.03,361.08 L290.97,360.10 L290.91,359.13 L290.87,358.16 L290.83,357.19 L290.80,356.22 L290.78,355.25 L290.76,354.28 L290.76,353.31 L290.76,352.35 L290.77,351.38 L290.79,350.42 L290.82,349.46 L290.86,348.50 L290.90,347.55 L290.95,346.59 L291.01,345.64 L291.08,344.69 L291.16,343.74 L291.24,342.79 L291.33,341.85 L291.43,340.91 L291.54,339.97 L291.65,339.03 L291.78,338.09 L291.91,337.16 L292.04,336.23 L292.19,335.30 L292.34,334.37 L292.50,333.45 L292.67,332.53 L292.84,331.61 L293.02,330.70 L293.21,329.79 L293.41,328.88 L293.61,327.97 L293.82,327.07 L294.04,326.17 L294.27,325.27 L293.99,324.33 L293.60,323.36 L293.21,322.38 L292.84,321.40 L292.47,320.41 L292.11,319.41 L291.76,318.41 L291.41,317.40 L291.08,316.38 L290.75,315.35 L290.44,314.31 L291.13,313.48 L292.07,312.70 L293.02,311.94 L293.98,311.19 L294.93,310.46 L295.90,309.74 L296.86,309.04 L297.83,308.35 L298.80,307.68 L299.78,307.02 L300.76,306.38 L301.25,305.60 L301.63,304.79 L302.01,303.98 L302.40,303.18 L302.80,302.38 L303.20,301.59 L303.60,300.80 L304.02,300.01 L304.43,299.23 L304.86,298.45 L305.29,297.68 L305.72,296.91 L306.16,296.15 L306.60,295.39 L307.05,294.63 L307.51,293.88 L307.97,293.13 L308.43,292.39 L308.90,291.65 L309.38,290.92 L309.86,290.19 L310.34,289.46 L310.83,288.74 L311.33,288.02 L311.83,287.31 L312.33,286.61 L312.84,285.90 L313.36,285.21 L313.87,284.51 L314.40,283.82 L314.93,283.14 L315.46,282.46 L315.99,281.78 L316.53,281.11 L317.08,280.45 L317.63,279.79 L318.18,279.13 L318.74,278.48 L319.30,277.83 L319.87,277.19 L320.44,276.55 L321.02,275.92 L321.60,275.29 L322.18,274.67 L322.77,274.05 L323.36,273.44 L323.95,272.83 L324.55,272.23 L325.15,271.63 L325.76,271.03 L326.37,270.45 L326.99,269.86 L327.60,269.28 L328.23,268.71 L328.85,268.14 L329.48,267.57 L330.11,267.01 L330.75,266.46 L331.39,265.91 L332.03,265.36 L332.68,264.82 L333.33,264.29 L333.98,263.76 L334.64,263.23 L335.30,262.71 L335.96,262.19 L336.63,261.68 L337.30,261.18 L337.97,260.68 L338.65,260.18 L339.33,259.69 L340.01,259.21 L340.70,258.73 L341.39,258.25 L342.08,257.78 L342.77,257.32 L343.47,256.86 L344.17,256.40 L344.88,255.95 L345.58,255.50 L346.29,255.07 L347.01,254.63 L347.72,254.20 L348.44,253.78 L349.16,253.36 L349.89,252.94 L350.61,252.53 L351.34,252.13 L352.08,251.73 L352.81,251.34 L353.55,250.95 L354.29,250.57 L355.03,250.19 L355.78,249.81 L356.53,249.45 L357.28,249.08 L358.03,248.73 L358.79,248.38 L359.54,248.03 L360.31,247.69 L361.07,247.35 L361.83,247.02 L362.60,246.70 L363.37,246.38 L364.14,246.06 L364.92,245.75 L365.70,245.45 L366.48,245.15 L367.26,244.86 L368.04,244.57 L368.83,244.29 L369.62,244.01 L370.41,243.74 L371.20,243.47 L371.99,243.21 L372.79,242.96 L373.59,242.71 L374.39,242.47 L375.19,242.23 L376.00,242.00 L376.81,241.77 L377.62,241.55 L378.43,241.33 L379.24,241.12 L380.05,240.92 L380.87,240.72 L381.69,240.53 L382.51,240.34 L383.33,240.16 L384.15,239.98 L384.98,239.81 L385.81,239.65 L386.64,239.49 L387.47,239.34 L388.30,239.19 L389.13,239.05 L389.97,238.91 L390.80,238.79 L391.64,238.66 L392.48,238.55 L393.32,238.43 L394.17,238.33 L395.01,238.23 L395.86,238.14 L396.70,238.05 L397.55,237.97 Z" fill="none" stroke="#df50ea" stroke-width="1.8"/>
<rect x="395.20" y="160.43" width="6.4" height="6.4" rx="2" fill="none" stroke="#c8ccc0" stroke-width="0.9"/>
<text x="398.40" y="158.62" class="sl">S1</text>
<rect x="526.13" y="201.17" width="6.4" height="6.4" rx="2" fill="none" stroke="#c8ccc0" stroke-width="0.9"/>
<text x="529.33" y="199.37" class="sl">S2</text>
<rect x="585.95" y="332.10" width="6.4" height="6.4" rx="2" fill="none" stroke="#c8ccc0" stroke-width="0.9"/>
<text x="589.15" y="330.30" class="sl">S3</text>
<rect x="526.13" y="463.03" width="6.4" height="6.4" rx="2" fill="none" stroke="#c8ccc0" stroke-width="0.9"/>
<text x="529.33" y="461.23" class="sl">S4</text>
<rect x="395.20" y="503.78" width="6.4" height="6.4" rx="2" fill="none" stroke="#c8ccc0" stroke-width="0.9"/>
<text x="398.40" y="501.98" class="sl">S5</text>
<rect x="283.34" y="443.96" width="6.4" height="6.4" rx="2" fill="none" stroke="#c8ccc0" stroke-width="0.9"/>
<text x="286.54" y="442.16" class="sl">S6</text>
<rect x="242.60" y="332.10" width="6.4" height="6.4" rx="2" fill="none" stroke="#c8ccc0" stroke-width="0.9"/>
<text x="245.80" y="330.30" class="sl">S7</text>
<rect x="283.34" y="220.24" width="6.4" height="6.4" rx="2" fill="none" stroke="#c8ccc0" stroke-width="0.9"/>
<text x="286.54" y="218.44" class="sl">S8</text>
<rect x="395.20" y="234.69" width="6.4" height="6.4" rx="2.2" fill="none" stroke="#cc9cec" stroke-width="0.9"/>
<text x="398.40" y="232.89" class="pl" text-anchor="middle">P1</text>
<rect x="342.03" y="252.53" width="6.4" height="6.4" rx="2.2" fill="none" stroke="#cc9cec" stroke-width="0.9"/>
<text x="345.23" y="250.73" class="pl" text-anchor="middle">P7</text>
<rect x="302.52" y="293.71" width="6.4" height="6.4" rx="2.2" fill="none" stroke="#cc9cec" stroke-width="0.9"/>
<text x="308.92" y="299.91" class="pl" text-anchor="start">P13</text>
<rect x="287.61" y="353.50" width="6.4" height="6.4" rx="2.2" fill="none" stroke="#cc9cec" stroke-width="0.9"/>
<text x="295.31" y="359.70" class="pl" text-anchor="start">P19</text>
<rect x="309.87" y="417.43" width="6.4" height="6.4" rx="2.2" fill="none" stroke="#cc9cec" stroke-width="0.9"/>
<text x="308.57" y="423.63" class="pl" text-anchor="end">P25</text>
<rect x="369.92" y="459.17" width="6.4" height="6.4" rx="2.2" fill="none" stroke="#cc9cec" stroke-width="0.9"/>
<text x="377.62" y="465.37" class="pl" text-anchor="start">P31</text>
<rect x="446.23" y="455.30" width="6.4" height="6.4" rx="2.2" fill="none" stroke="#cc9cec" stroke-width="0.9"/>
<text x="450.03" y="454.00" class="pl" text-anchor="middle">P37</text>
<rect x="503.93" y="404.75" width="6.4" height="6.4" rx="2.2" fill="none" stroke="#cc9cec" stroke-width="0.9"/>
<text x="507.13" y="402.95" class="pl" text-anchor="middle">P43</text>
<rect x="517.89" y="332.10" width="6.4" height="6.4" rx="2.2" fill="none" stroke="#cc9cec" stroke-width="0.9"/>
<text x="525.59" y="338.30" class="pl" text-anchor="start">P49</text>
<rect x="488.18" y="269.97" width="6.4" height="6.4" rx="2.2" fill="none" stroke="#cc9cec" stroke-width="0.9"/>
<text x="486.88" y="276.17" class="pl" text-anchor="end">P55</text>
<rect x="434.18" y="238.00" width="6.4" height="6.4" rx="2.2" fill="none" stroke="#cc9cec" stroke-width="0.9"/>
<text x="432.88" y="244.20" class="pl" text-anchor="end">P61</text>
<path d="M403.90,335.30 h8 M407.90,330.30 v10" stroke="#a8ac88" stroke-width="1.1"/>
<path d="M398.52,343.82 h8 M402.52,339.82 v8" stroke="#d898e8" stroke-width="1.1"/>
<rect x="457.27" y="448.62" width="8" height="8.5" fill="#e8dca0" stroke="#f0f0d8" stroke-width="0.8"/>
<path d="M457.77,454.42 L464.77,449.42 L464.77,451.92 L459.27,455.42 Z" fill="#58b030"/>
<path d="M778.5,300 C787,309 789,332 776.5,347" fill="none" stroke="#ff1212" stroke-width="5.8" stroke-linecap="round"/>
<path d="M769.5,357.5 L770.8,342.3 L784.5,353.8 Z" fill="#ff1212" stroke="#ff1212" stroke-width="0.8" stroke-linejoin="round"/>
<line x1="789" y1="108" x2="789" y2="563" stroke="#0a2a55" stroke-width="1"/>
<line x1="8" y1="108" x2="789" y2="108" stroke="#0a2450" stroke-width="1"/>
<!-- watermark -->
<rect x="920" y="558" width="80" height="15" fill="#000" opacity="0.62"/>
<text x="924.5" y="569.3" style="font-size:10.4px;fill:#f2f2f2">MakeAGIF.com</text>
</svg>
<div class="t" style="left:11px;top:7.5px;font-size:8.2px;letter-spacing:-0.245px;color:#62666b">Stator Rotor Profile Polar - CH_Frieira Grupo_1 Rotor_Alternador - All States</div>
<div class="t" style="left:92px;top:25px;font-size:8.6px;color:#2a2d31">MinAirGap</div>
<svg width="1000" height="573" viewBox="0 0 1000 573" style="position:absolute;left:0;top:0">
<text x="189" y="91.7" fill="#d7dfea" style="font-size:9.2px;font-weight:normal" text-anchor="start" xml:space="preserve">Angle:</text>
<text x="242.2" y="91.7" fill="#e3d49a" style="font-size:9.2px;font-weight:normal" text-anchor="start" xml:space="preserve">151.9 °</text>
<text x="286.3" y="91.7" fill="#d7dfea" style="font-size:9.2px;font-weight:normal" text-anchor="start" xml:space="preserve">r:</text>
<text x="368.3" y="91.7" fill="#e3d49a" style="font-size:9.2px;font-weight:normal" text-anchor="end" xml:space="preserve">34.969 mm</text>
<text x="383" y="91.7" fill="#d7dfea" style="font-size:8.8px;font-weight:normal" text-anchor="start" xml:space="preserve">RPM: 93.7</text>
<text x="439.5" y="91.7" fill="#d7dfea" style="font-size:8.9px;font-weight:normal" text-anchor="start" xml:space="preserve">State: Carga_de_60%_a_PC</text>
<text x="569.6" y="91.7" fill="#d7dfea" style="font-size:9.3px;font-weight:normal" text-anchor="start" xml:space="preserve">Timestamp: 1/20/2013 10:00:00 PM</text>
<text x="731.6" y="91.7" fill="#d7dfea" style="font-size:9.1px;font-weight:normal" text-anchor="start" xml:space="preserve">Name: Rotor</text>
<text x="189" y="102.8" fill="#d7dfea" style="font-size:9.2px;font-weight:normal" text-anchor="start" xml:space="preserve">Rotor Pole:</text>
<text x="242.2" y="102.8" fill="#e3d49a" style="font-size:9.2px;font-weight:normal" text-anchor="start" xml:space="preserve">38</text>
<text x="286.3" y="102.8" fill="#d7dfea" style="font-size:9.2px;font-weight:normal" text-anchor="start" xml:space="preserve">Air Gap:</text>
<text x="368.3" y="102.8" fill="#e3d49a" style="font-size:9.2px;font-weight:normal" text-anchor="end" xml:space="preserve">12.359 mm</text>
<text x="793" y="218.30" fill="#f4f6f9" style="font-size:9.4px;font-weight:bold" text-anchor="start" xml:space="preserve">Air Gap Data</text>
<text x="793" y="229.64" fill="#d7dfea" style="font-size:9.0px;font-weight:normal" text-anchor="start" xml:space="preserve">Nominal Air Gap:</text>
<text x="883.2" y="229.64" fill="#e3d49a" style="font-size:9.0px;font-weight:normal" text-anchor="start" xml:space="preserve">15.000 mm</text>
<text x="793" y="240.98" fill="#d7dfea" style="font-size:9.0px;font-weight:normal" text-anchor="start" xml:space="preserve">Average:</text>
<text x="883.2" y="240.98" fill="#e3d49a" style="font-size:9.0px;font-weight:normal" text-anchor="start" xml:space="preserve">14.972 mm</text>
<text x="793" y="252.32" fill="#d7dfea" style="font-size:9.0px;font-weight:normal" text-anchor="start" xml:space="preserve">Average Deviation:</text>
<text x="883.2" y="252.32" fill="#e3d49a" style="font-size:9.0px;font-weight:normal" text-anchor="start" xml:space="preserve">-0.18 %</text>
<text x="793" y="263.66" fill="#d7dfea" style="font-size:9.0px;font-weight:normal" text-anchor="start" xml:space="preserve">Minimum:</text>
<text x="883.2" y="263.66" fill="#e3d49a" style="font-size:9.0px;font-weight:normal" text-anchor="start" xml:space="preserve">5.004 mm  Pole 38</text>
<text x="793" y="275.00" fill="#d7dfea" style="font-size:9.0px;font-weight:normal" text-anchor="start" xml:space="preserve">Sensor (at Min):</text>
<text x="883.2" y="275.00" fill="#e3d49a" style="font-size:9.0px;font-weight:normal" text-anchor="start" xml:space="preserve">GP1-10-LS7</text>
<text x="793" y="286.34" fill="#d7dfea" style="font-size:9.0px;font-weight:normal" text-anchor="start" xml:space="preserve">Minimum Deviation:</text>
<text x="883.2" y="286.34" fill="#e3d49a" style="font-size:9.0px;font-weight:normal" text-anchor="start" xml:space="preserve">-66.64 %</text>
<text x="793" y="297.68" fill="#d7dfea" style="font-size:9.0px;font-weight:normal" text-anchor="start" xml:space="preserve">Maximum:</text>
<text x="883.2" y="297.68" fill="#e3d49a" style="font-size:9.0px;font-weight:normal" text-anchor="start" xml:space="preserve">24.999 mm  Pole 6</text>
<text x="793" y="309.02" fill="#d7dfea" style="font-size:9.0px;font-weight:normal" text-anchor="start" xml:space="preserve">Sensor (at Max):</text>
<text x="883.2" y="309.02" fill="#e3d49a" style="font-size:9.0px;font-weight:normal" text-anchor="start" xml:space="preserve">GP1-10-LS3</text>
<text x="793" y="320.36" fill="#d7dfea" style="font-size:9.0px;font-weight:normal" text-anchor="start" xml:space="preserve">Maximum Deviation:</text>
<text x="883.2" y="320.36" fill="#e3d49a" style="font-size:9.0px;font-weight:normal" text-anchor="start" xml:space="preserve">66.66 %</text>
<text x="793" y="343.04" fill="#f4f6f9" style="font-size:9.4px;font-weight:bold" text-anchor="start" xml:space="preserve">Rotor Geometric</text>
<text x="793" y="354.38" fill="#d7dfea" style="font-size:9.0px;font-weight:normal" text-anchor="start" xml:space="preserve">Center (r, theta):</text>
<text x="883.2" y="354.38" fill="#e3d49a" style="font-size:9.0px;font-weight:normal" text-anchor="start" xml:space="preserve">(2.481 mm, 154.2°)</text>
<text x="793" y="365.72" fill="#d7dfea" style="font-size:9.0px;font-weight:normal" text-anchor="start" xml:space="preserve">Roundness:</text>
<text x="883.2" y="365.72" fill="#e3d49a" style="font-size:9.0px;font-weight:normal" text-anchor="start" xml:space="preserve">9.996 mm</text>
<text x="793" y="377.06" fill="#d7dfea" style="font-size:9.0px;font-weight:normal" text-anchor="start" xml:space="preserve">Offset:</text>
<text x="883.2" y="377.06" fill="#e3d49a" style="font-size:9.0px;font-weight:normal" text-anchor="start" xml:space="preserve">2.481 mm</text>
<text x="793" y="399.74" fill="#f4f6f9" style="font-size:9.4px;font-weight:bold" text-anchor="start" xml:space="preserve">Stator Geometric</text>
<text x="793" y="411.08" fill="#d7dfea" style="font-size:9.0px;font-weight:normal" text-anchor="start" xml:space="preserve">Center (r, theta):</text>
<text x="883.2" y="411.08" fill="#e3d49a" style="font-size:9.0px;font-weight:normal" text-anchor="start" xml:space="preserve">(2.500 mm, 90.0°)</text>
<text x="793" y="422.42" fill="#d7dfea" style="font-size:9.0px;font-weight:normal" text-anchor="start" xml:space="preserve">Roundness:</text>
<text x="883.2" y="422.42" fill="#e3d49a" style="font-size:9.0px;font-weight:normal" text-anchor="start" xml:space="preserve">10.000 mm</text>
<text x="793" y="433.76" fill="#d7dfea" style="font-size:9.0px;font-weight:normal" text-anchor="start" xml:space="preserve">Concentricity:</text>
<text x="883.2" y="433.76" fill="#e3d49a" style="font-size:9.0px;font-weight:normal" text-anchor="start" xml:space="preserve">2.500 mm</text>
</svg>
</body></html>
